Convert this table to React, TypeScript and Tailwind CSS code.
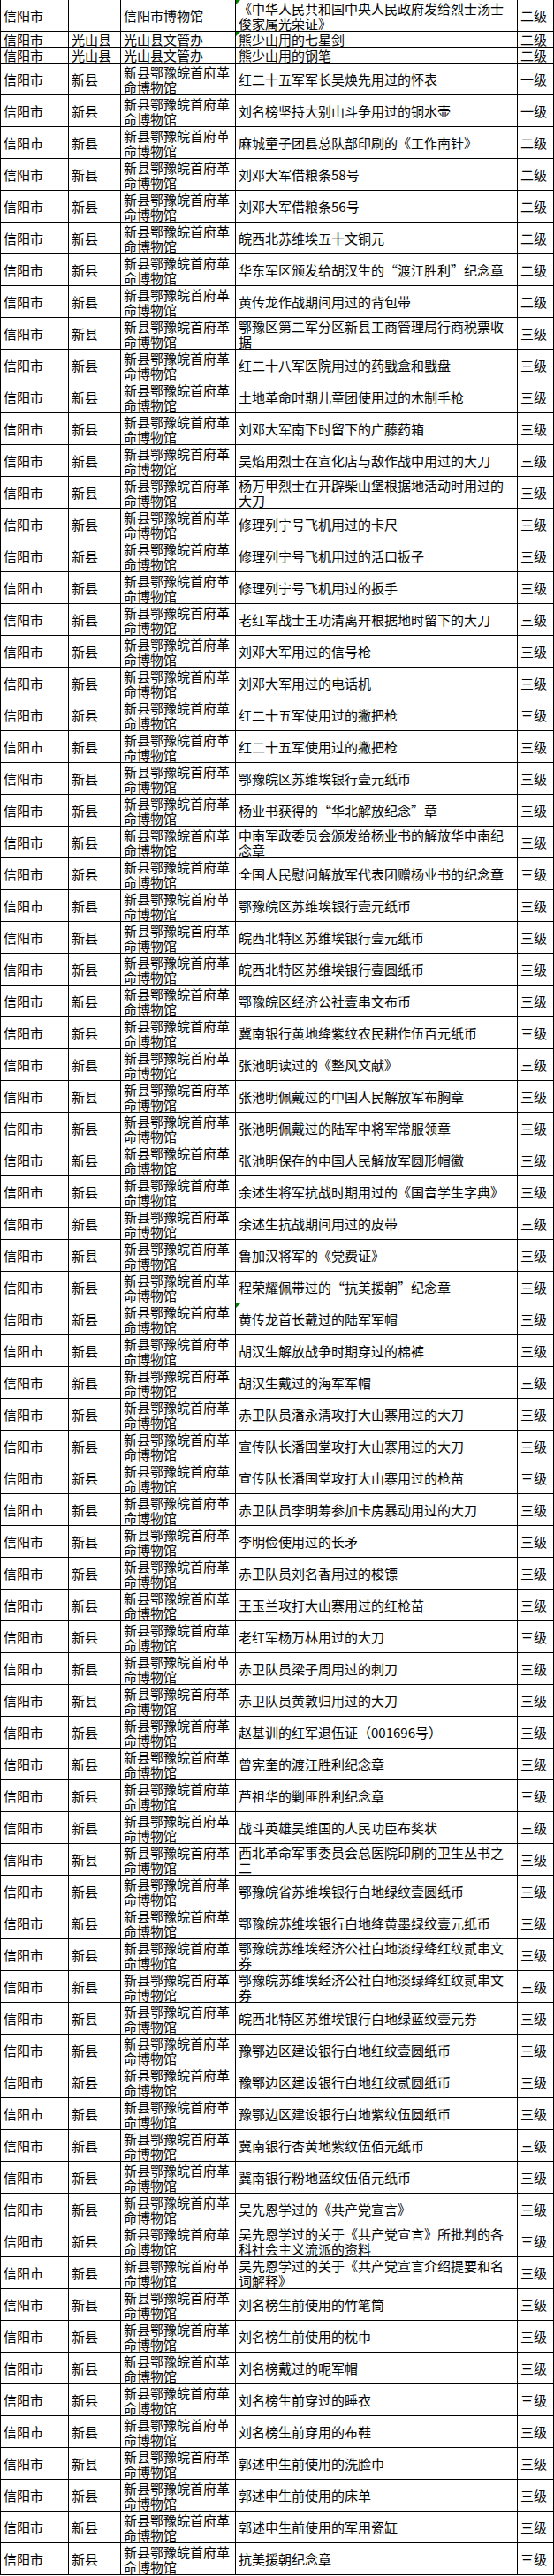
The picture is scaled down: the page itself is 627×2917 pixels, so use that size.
import React from 'react';

type Row = {
  city: string;
  county: string;
  museum: string;
  item: string;
  grade: string;
  tall: boolean;
  mark?: boolean;
};

const XM = '新县鄂豫皖首府革命博物馆';

// 新县馆藏，[名称, 级别, 绿角标]
const xinxian: [string, string, boolean?][] = [
  ['红二十五军军长吴焕先用过的怀表', '一级'],
  ['刘名榜坚持大别山斗争用过的铜水壶', '一级'],
  ['麻城童子团县总队部印刷的《工作南针》', '二级'],
  ['刘邓大军借粮条58号', '二级'],
  ['刘邓大军借粮条56号', '二级'],
  ['皖西北苏维埃五十文铜元', '二级'],
  ['华东军区颁发给胡汉生的“渡江胜利”纪念章', '二级'],
  ['黄传龙作战期间用过的背包带', '二级'],
  ['鄂豫区第二军分区新县工商管理局行商税票收据', '三级'],
  ['红二十八军医院用过的药戥盒和戥盘', '三级'],
  ['土地革命时期儿童团使用过的木制手枪', '三级'],
  ['刘邓大军南下时留下的广藤药箱', '三级'],
  ['吴焰用烈士在宣化店与敌作战中用过的大刀', '三级'],
  ['杨万甲烈士在开辟柴山堡根据地活动时用过的大刀', '三级'],
  ['修理列宁号飞机用过的卡尺', '三级'],
  ['修理列宁号飞机用过的活口扳子', '三级'],
  ['修理列宁号飞机用过的扳手', '三级'],
  ['老红军战士王功清离开根据地时留下的大刀', '三级'],
  ['刘邓大军用过的信号枪', '三级'],
  ['刘邓大军用过的电话机', '三级'],
  ['红二十五军使用过的撇把枪', '三级'],
  ['红二十五军使用过的撇把枪', '三级'],
  ['鄂豫皖区苏维埃银行壹元纸币', '三级'],
  ['杨业书获得的“华北解放纪念”章', '三级'],
  ['中南军政委员会颁发给杨业书的解放华中南纪念章', '三级'],
  ['全国人民慰问解放军代表团赠杨业书的纪念章', '三级'],
  ['鄂豫皖区苏维埃银行壹元纸币', '三级'],
  ['皖西北特区苏维埃银行壹元纸币', '三级'],
  ['皖西北特区苏维埃银行壹圆纸币', '三级'],
  ['鄂豫皖区经济公社壹串文布币', '三级'],
  ['冀南银行黄地绛紫纹农民耕作伍百元纸币', '三级'],
  ['张池明读过的《整风文献》', '三级'],
  ['张池明佩戴过的中国人民解放军布胸章', '三级'],
  ['张池明佩戴过的陆军中将军常服领章', '三级'],
  ['张池明保存的中国人民解放军圆形帽徽', '三级'],
  ['余述生将军抗战时期用过的《国音学生字典》', '三级'],
  ['余述生抗战期间用过的皮带', '三级'],
  ['鲁加汉将军的《党费证》', '三级'],
  ['程荣耀佩带过的“抗美援朝”纪念章', '三级'],
  ['黄传龙首长戴过的陆军军帽', '三级', true],
  ['胡汉生解放战争时期穿过的棉裤', '三级'],
  ['胡汉生戴过的海军军帽', '三级'],
  ['赤卫队员潘永清攻打大山寨用过的大刀', '三级'],
  ['宣传队长潘国堂攻打大山寨用过的大刀', '三级'],
  ['宣传队长潘国堂攻打大山寨用过的枪苗', '三级'],
  ['赤卫队员李明筹参加卡房暴动用过的大刀', '三级'],
  ['李明俭使用过的长矛', '三级'],
  ['赤卫队员刘名香用过的梭镖', '三级'],
  ['王玉兰攻打大山寨用过的红枪苗', '三级'],
  ['老红军杨万林用过的大刀', '三级'],
  ['赤卫队员梁子周用过的刺刀', '三级'],
  ['赤卫队员黄敦归用过的大刀', '三级'],
  ['赵基训的红军退伍证（001696号）', '三级'],
  ['曾宪奎的渡江胜利纪念章', '三级'],
  ['芦祖华的剿匪胜利纪念章', '三级'],
  ['战斗英雄吴维国的人民功臣布奖状', '三级'],
  ['西北革命军事委员会总医院印刷的卫生丛书之二', '三级'],
  ['鄂豫皖省苏维埃银行白地绿纹壹圆纸币', '三级'],
  ['鄂豫皖苏维埃银行白地绛黄墨绿纹壹元纸币', '三级'],
  ['鄂豫皖苏维埃经济公社白地淡绿绛红纹贰串文券', '三级'],
  ['鄂豫皖苏维埃经济公社白地淡绿绛红纹贰串文券', '三级'],
  ['皖西北特区苏维埃银行白地绿蓝纹壹元券', '三级'],
  ['豫鄂边区建设银行白地红纹壹圆纸币', '三级'],
  ['豫鄂边区建设银行白地红纹贰圆纸币', '三级'],
  ['豫鄂边区建设银行白地紫纹伍圆纸币', '三级'],
  ['冀南银行杏黄地紫纹伍佰元纸币', '三级'],
  ['冀南银行粉地蓝纹伍佰元纸币', '三级'],
  ['吴先恩学过的《共产党宣言》', '三级'],
  ['吴先恩学过的关于《共产党宣言》所批判的各科社会主义流派的资料', '三级'],
  ['吴先恩学过的关于《共产党宣言介绍提要和名词解释》', '三级'],
  ['刘名榜生前使用的竹笔筒', '三级'],
  ['刘名榜生前使用的枕巾', '三级'],
  ['刘名榜戴过的呢军帽', '三级'],
  ['刘名榜生前穿过的睡衣', '三级'],
  ['刘名榜生前穿用的布鞋', '三级'],
  ['郭述申生前使用的洗脸巾', '三级'],
  ['郭述申生前使用的床单', '三级'],
  ['郭述申生前使用的军用瓷缸', '三级'],
  ['抗美援朝纪念章', '三级'],
];

const rows: Row[] = [
  {
    city: '信阳市',
    county: '',
    museum: '信阳市博物馆',
    item: '《中华人民共和国中央人民政府发给烈士汤士俊家属光荣证》',
    grade: '二级',
    tall: true,
    mark: true,
  },
  { city: '信阳市', county: '光山县', museum: '光山县文管办', item: '熊少山用的七星剑', grade: '二级', tall: false, mark: true },
  { city: '信阳市', county: '光山县', museum: '光山县文管办', item: '熊少山用的钢笔', grade: '二级', tall: false },
  ...xinxian.map(([item, grade, mark]) => ({
    city: '信阳市',
    county: '新县',
    museum: XM,
    item,
    grade,
    tall: true,
    mark,
  })),
];

const cell = 'flex items-center border-r border-b border-black px-[3px]';

export default function App() {
  return (
    <div
      className="w-[627px] bg-white text-black text-[15px] leading-[17px]"
      style={{ fontFamily: '"Noto Sans CJK SC", "Noto Sans", sans-serif' }}
    >
      <div className="grid grid-cols-[77px_59px_130px_319px_41px] border-l border-black">
        {rows.map((r, idx) => {
          const h = r.tall ? 'h-[36px]' : 'h-[18px]';
          return (
            <React.Fragment key={idx}>
              <div className={`${cell} ${h}`}>{r.city}</div>
              <div className={`${cell} ${h}`}>{r.county}</div>
              <div className={`${cell} ${h}`}>
                <span className="break-all">{r.museum}</span>
              </div>
              <div className={`${cell} ${h} relative`}>
                {r.mark && (
                  <span className="absolute left-0 top-0 w-0 h-0 border-t-[5px] border-t-[#008000] border-r-[5px] border-r-transparent" />
                )}
                <span className="break-all">{r.item}</span>
              </div>
              <div className={`${cell} ${h}`}>{r.grade}</div>
            </React.Fragment>
          );
        })}
      </div>
    </div>
  );
}
